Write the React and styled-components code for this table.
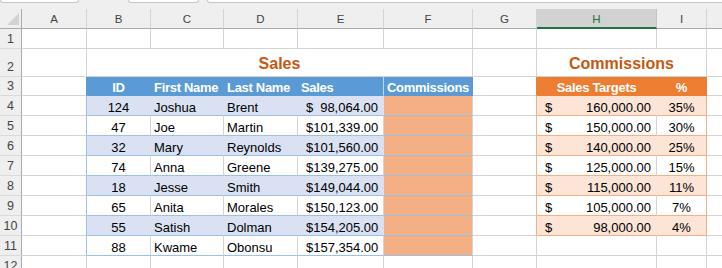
import React from 'react'
import styled, { createGlobalStyle } from 'styled-components'

const BLUE = '#5b9bd5'
const BLUE_LIGHT = '#d9e1f2'
const BLUE_LINE = '#9bc2e6'
const ORANGE = '#ed7d31'
const ORANGE_LIGHT = '#fce4d6'
const ORANGE_MID = '#f4b084'
const GRID = '#d4d4d4'

const GlobalStyle = createGlobalStyle`
  body {
    margin: 0;
    background: #fff;
    font-family: "Liberation Sans", Arial, sans-serif;
  }
`

const Window = styled.div`
  width: 722px;
  height: 268px;
  overflow: hidden;
  background: #fff;
`

const Toolbar = styled.div`
  display: flex;
  align-items: flex-start;
  height: 9px;
  background: #efefef;
`

const FieldBox = styled.div`
  box-sizing: border-box;
  height: 3px;
  flex: ${p => (p.$w ? `0 0 ${p.$w}px` : '1')};
  margin-left: ${p => p.$gap || 0}px;
  margin-right: ${p => (p.$w ? 0 : -4)}px;
  background: #fff;
  border: 1px solid #c6c6c6;
  border-top: none;
  border-radius: 0 0 3px 3px;
`

const Sheet = styled.div`
  display: grid;
  grid-template-columns: 22px 65px 64px 73px 74px 86px 89px 64px 120px 50px 64px;
  grid-template-rows: 20px 20px 28px 19px repeat(9, 20px);
`

const ColHead = styled.div`
  box-sizing: border-box;
  display: flex;
  align-items: center;
  justify-content: center;
  padding-top: 1px;
  font-size: 11.5px;
  background: ${p => (p.$active ? '#d2d2d2' : '#efefef')};
  color: ${p => (p.$active ? '#217346' : '#444')};
  border-right: 1px solid ${p => (p.$active ? '#c4c4c4' : '#d4d4d4')};
  border-bottom: ${p => (p.$active ? '2px solid #217346' : '1px solid #ababab')};
`

const Corner = styled(ColHead)`
  position: relative;
  border-right-color: #ababab;

  svg {
    position: absolute;
    left: 0;
    top: 0;
  }
`

const RowHead = styled.div`
  box-sizing: border-box;
  display: flex;
  align-items: flex-end;
  justify-content: center;
  padding-bottom: 1px;
  font-size: 12.5px;
  line-height: 15px;
  background: #efefef;
  color: #444;
  border-right: 1px solid #ababab;
  border-bottom: 1px solid #dadada;
`

const Cell = styled.div`
  box-sizing: border-box;
  display: flex;
  align-items: flex-end;
  justify-content: ${p =>
    p.$align === 'center' ? 'center' : p.$align === 'right' ? 'flex-end' : 'flex-start'};
  min-width: 0;
  padding: 0 3px;
  white-space: nowrap;
  font-size: 13px;
  line-height: 15px;
  color: #000;
  background: ${p => p.$fill || '#fff'};
  border-right: 1px solid ${p => p.$right || GRID};
  border-bottom: 1px solid ${p => p.$bottom || GRID};
`

const TitleCell = styled(Cell)`
  grid-column: span ${p => p.$span};
  justify-content: center;
  padding-bottom: 2px;
  font-size: 16px;
  line-height: 20px;
  font-weight: 700;
  color: #c65911;
`

const HeadCell = styled(Cell)`
  font-weight: 700;
  letter-spacing: -0.3px;
  color: #fff;
`

const MoneyCell = styled(Cell)`
  justify-content: space-between;
  padding: 0 5px 0 8px;
`

const blank = n => Array.from({ length: n }, (_, i) => <Cell key={`b${i}`} />)

// J sits past the window edge, its letter is not visible
const letters = ['A', 'B', 'C', 'D', 'E', 'F', 'G', 'H', 'I', '']

const sales = [
  [124, 'Joshua', 'Brent', '98,064.00'],
  [47, 'Joe', 'Martin', '101,339.00'],
  [32, 'Mary', 'Reynolds', '101,560.00'],
  [74, 'Anna', 'Greene', '139,275.00'],
  [18, 'Jesse', 'Smith', '149,044.00'],
  [65, 'Anita', 'Morales', '150,123.00'],
  [55, 'Satish', 'Dolman', '154,205.00'],
  [88, 'Kwame', 'Obonsu', '157,354.00'],
]

const targets = [
  ['160,000.00', '35%'],
  ['150,000.00', '30%'],
  ['140,000.00', '25%'],
  ['125,000.00', '15%'],
  ['115,000.00', '11%'],
  ['105,000.00', '7%'],
  ['98,000.00', '4%'],
]

function SalesRow({ row, index }) {
  const [id, first, last, amount] = row
  const shaded = index % 2 === 0
  const fill = shaded ? BLUE_LIGHT : '#fff'
  const inner = shaded ? BLUE_LIGHT : GRID
  const target = targets[index]
  const tFill = shaded ? ORANGE_LIGHT : '#fff'

  return (
    <>
      <RowHead>{index + 4}</RowHead>
      <Cell $right={BLUE_LINE} />
      <Cell $align="center" $fill={fill} $right={inner} $bottom={BLUE_LINE}>
        {id}
      </Cell>
      <Cell $fill={fill} $right={inner} $bottom={BLUE_LINE}>
        {first}
      </Cell>
      <Cell $fill={fill} $right={inner} $bottom={BLUE_LINE}>
        {last}
      </Cell>
      <MoneyCell $fill={fill} $right={inner} $bottom={BLUE_LINE}>
        <span>$</span>
        <span>{amount}</span>
      </MoneyCell>
      <Cell $fill={ORANGE_MID} $bottom={BLUE_LINE} />
      {target ? (
        <>
          <Cell $right={ORANGE_MID} />
          <MoneyCell $fill={tFill} $right={shaded ? ORANGE_LIGHT : GRID} $bottom={ORANGE_MID}>
            <span>$</span>
            <span>{target[0]}</span>
          </MoneyCell>
          <Cell $align="center" $fill={tFill} $right={ORANGE_MID} $bottom={ORANGE_MID}>
            {target[1]}
          </Cell>
        </>
      ) : (
        blank(3)
      )}
      <Cell />
    </>
  )
}

export default function App() {
  return (
    <Window>
      <GlobalStyle />
      <Toolbar>
        <FieldBox $w={79} />
        <FieldBox $w={71} $gap={49} />
        <FieldBox $gap={8} />
      </Toolbar>
      <Sheet>
        <Corner>
          <svg width="22" height="20" viewBox="0 0 22 20">
            <polygon points="7,16 19,16 19,4" fill="#d3d3d3" />
          </svg>
        </Corner>
        {letters.map((l, i) => (
          <ColHead key={i} $active={l === 'H'}>
            {l}
          </ColHead>
        ))}

        <RowHead>1</RowHead>
        {blank(10)}

        <RowHead>2</RowHead>
        <Cell />
        <TitleCell $span={5}>Sales</TitleCell>
        <Cell />
        <TitleCell $span={2}>Commissions</TitleCell>
        <Cell />

        <RowHead>3</RowHead>
        <Cell $right={BLUE} />
        <HeadCell $align="center" $fill={BLUE} $right={BLUE} $bottom={BLUE}>
          ID
        </HeadCell>
        <HeadCell $fill={BLUE} $right={BLUE} $bottom={BLUE}>
          First Name
        </HeadCell>
        <HeadCell $fill={BLUE} $right={BLUE} $bottom={BLUE}>
          Last Name
        </HeadCell>
        <HeadCell $fill={BLUE} $right="#bdd7ee" $bottom={BLUE}>
          Sales
        </HeadCell>
        <HeadCell $align="center" $fill={BLUE} $right={BLUE} $bottom={BLUE}>
          Commissions
        </HeadCell>
        <Cell $right={ORANGE} />
        <HeadCell $align="center" $fill={ORANGE} $right={ORANGE} $bottom={ORANGE}>
          Sales Targets
        </HeadCell>
        <HeadCell $align="center" $fill={ORANGE} $right={ORANGE} $bottom={ORANGE}>
          %
        </HeadCell>
        <Cell />

        {sales.map((row, i) => (
          <SalesRow key={row[0]} row={row} index={i} />
        ))}

        <RowHead>12</RowHead>
        {blank(10)}
      </Sheet>
    </Window>
  )
}
